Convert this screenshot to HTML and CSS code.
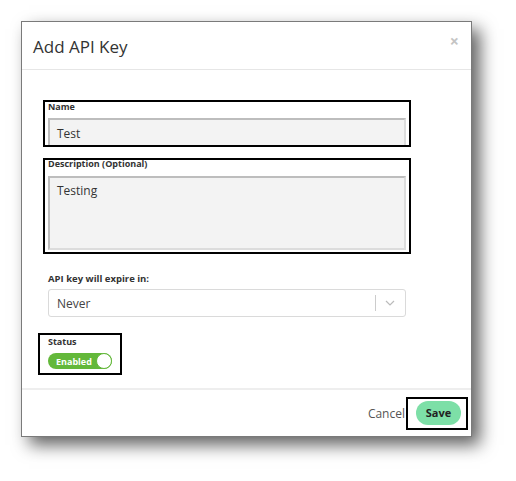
FILE: index.html
```html
<!DOCTYPE html>
<html lang="en">
<head>
<meta charset="utf-8">
<title>Add API Key</title>
<link rel="stylesheet" href="styles.css">
</head>
<body>
<div class="modal">
  <div class="modal-header">
    <h2 class="modal-title">Add API Key</h2>
    <span class="close">×</span>
  </div>
  <div class="modal-body">
    <div class="mark mark-name">
      <div class="label">Name</div>
      <div class="input">Test</div>
    </div>
    <div class="mark mark-desc">
      <div class="label">Description (Optional)</div>
      <div class="textarea">Testing</div>
    </div>
    <div class="label label-expire">API key will expire in:</div>
    <div class="select">
      <span class="select-value">Never</span>
      <span class="select-sep"></span>
      <svg class="chevron" width="10" height="6" viewBox="0 0 10 6"><path d="M1 1l4 4 4-4" fill="none" stroke="#bbb" stroke-width="1.2"/></svg>
    </div>
    <div class="mark mark-status">
      <div class="label">Status</div>
      <div class="toggle"><span class="toggle-text">Enabled</span><span class="knob"></span></div>
    </div>
  </div>
  <div class="modal-footer">
    <span class="cancel">Cancel</span>
    <div class="mark mark-save"><span class="save">Save</span></div>
  </div>
</div>
</body>
</html>
```
FILE: styles.css
```css
html, body { margin: 0; padding: 0; background: #fff; }
body {
  font-family: "Open Sans", "Noto Sans", sans-serif;
  padding: 21px 0 0 21px;
  width: 516px; height: 481px; box-sizing: border-box; overflow: hidden;
}
.modal {
  width: 451px; height: 416px; box-sizing: border-box;
  border: 1px solid #7a7a7a;
  background: #fff;
  box-shadow: 8px 8px 16px rgba(0,0,0,0.62);
  display: flex; flex-direction: column;
}
.modal-header {
  height: 47px; border-bottom: 1px solid #e6e6e6;
  display: flex; align-items: center; justify-content: space-between;
  padding: 0 12px 0 11px; flex-shrink: 0;
}
.modal-title { margin: 0; font-size: 17px; font-weight: 400; color: #333; position: relative; top: 1px; }
.close { color: #c4c4c4; font-size: 16px; font-weight: 700; line-height: 1; position: relative; top: -5px; }
.modal-body {
  flex: 1; padding: 30px 0 0 21px; display: flex; flex-direction: column; align-items: flex-start;
}
.mark { border: 2px solid #000; box-sizing: border-box; }
.label { font-size: 9px; font-weight: 700; color: #333; line-height: 14px; }
.mark-name { width: 368px; height: 47px; padding: 0 3px 0 3px; overflow: hidden; }
.mark-name .label { height: 16px; line-height: 10px; }
.input, .textarea {
  box-sizing: border-box; background: #f3f3f3;
  border: 2px solid; border-color: #bdbdbd #dcdcdc #dcdcdc #bdbdbd;
  font-size: 12px; color: #333; padding: 5px 7px;
}
.input { height: 30px; width: 358px; }
.mark-desc { width: 368px; height: 96px; margin-top: 11px; padding: 0 3px; }
.mark-desc .label { height: 16px; line-height: 8px; }
.textarea { height: 74px; width: 358px; padding-top: 4px; }
.label-expire { margin: 18px 0 3px 5px; font-size: 9.5px; }
.select {
  width: 358px; height: 28px; box-sizing: border-box; margin-left: 5px;
  border: 1px solid #dadada; border-radius: 3px;
  display: flex; align-items: center; padding-left: 8px;
  font-size: 12px; color: #444;
}
.select-value { flex: 1; }
.select-sep { width: 1px; height: 16px; background: #ccc; }
.chevron { margin: 0 10px 0 9px; }
.mark-status { width: 84px; height: 42px; margin: 16px 0 0 -5px; padding: 0 0 0 8px; }
.mark-status .label { line-height: 12px; margin-top: 1px; }
.toggle {
  width: 64px; height: 16px; box-sizing: border-box; margin-top: 5px;
  background: #63b83a; border-radius: 8px;
  display: flex; align-items: center; justify-content: space-between;
  padding-left: 8px;
}
.toggle-text { color: #fff; font-size: 9px; font-weight: 700; }
.knob { width: 16px; height: 16px; box-sizing: border-box; border-radius: 50%; background: #fff; border: 1px solid #63b83a; }
.modal-footer {
  height: 48px; border-top: 2px solid #eeeeee; flex-shrink: 0; box-sizing: border-box;
  display: flex; align-items: center; justify-content: flex-end; padding-right: 3px;
}
.cancel { font-size: 12px; color: #555; margin-right: 1px; }
.mark-save { padding: 2px 5px 3px 8px; height: 33px; }
.save {
  display: flex; align-items: center; justify-content: center;
  width: 45px; height: 24px; border-radius: 12px; background: #7ddfa7;
  font-size: 11px; font-weight: 700; color: #222;
}
```
